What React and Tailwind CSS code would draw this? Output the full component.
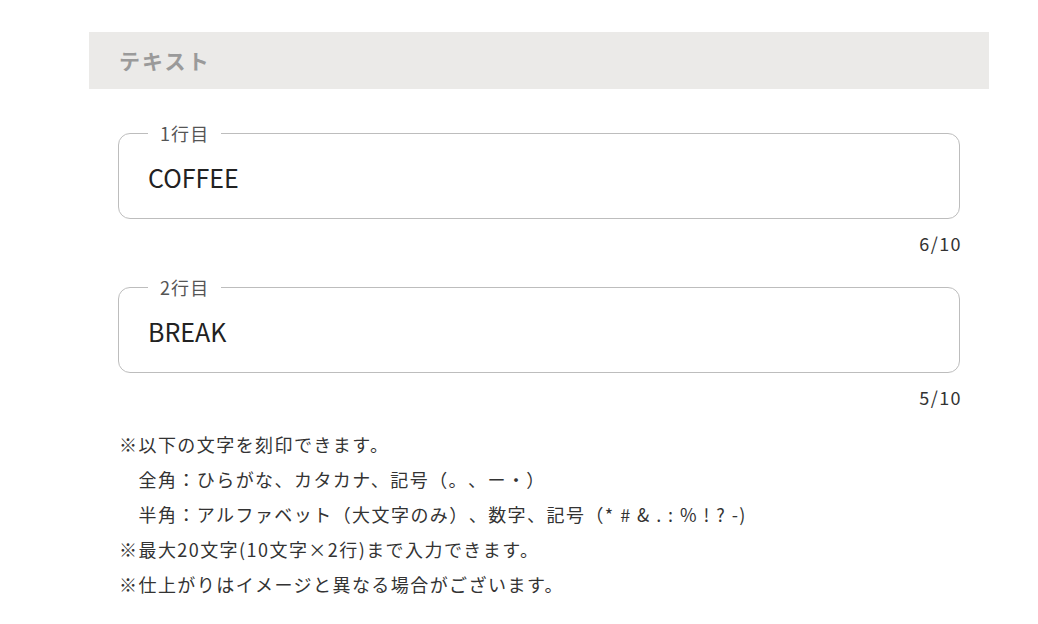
// Engraving text form
const font = { fontFamily: '"Noto Sans CJK JP", "Noto Sans", sans-serif' }

function LineField({ label, value, max }) {
  return (
    <div>
      <fieldset className="rounded-[12px] border border-[#bdbdbd] px-[29px] pb-[17px] m-0 min-w-0">
        <legend className="px-[12px] text-[18px] leading-[24px] text-[#555] tracking-[0.06em]">{label}</legend>
        <input
          readOnly
          value={value}
          className="block w-full h-[48px] mt-[8px] text-[25px] text-[#222] bg-transparent outline-none"
          style={font}
        />
      </fieldset>
      <div className="mt-[12px] -mr-[2px] text-right text-[18px] leading-[24px] text-[#333] tracking-[0.08em]">
        {value.length}/{max}
      </div>
    </div>
  )
}

export default function App() {
  return (
    <div className="min-h-screen bg-white [text-spacing-trim:space-all]" style={font}>
      <div className="w-[900px] ml-[89px] pt-[32px]">

        {/* ── Section header ── */}
        <div className="h-[57px] bg-[#ebeae8] flex items-center px-[30px]">
          <h2 className="text-[21px] font-bold text-[#9a9a9a] tracking-[0.1em]">テキスト</h2>
        </div>

        {/* ── Fields ── */}
        <div className="px-[29px] pt-[32px] space-y-[20px]">
          <LineField label="1行目" value="COFFEE" max={10} />
          <LineField label="2行目" value="BREAK" max={10} />
        </div>

        {/* ── Notes ── */}
        <div className="px-[30px] mt-[18px] text-[18px] leading-[35px] text-[#333] tracking-[0.08em]">
          <p>※以下の文字を刻印できます。</p>
          <p>　全角：ひらがな、カタカナ、記号（。、ー・）</p>
          <p>　半角：アルファベット（大文字のみ）、数字、記号（* # & . : % ! ? -)</p>
          <p>※最大20文字(10文字×2行)まで入力できます。</p>
          <p>※仕上がりはイメージと異なる場合がございます。</p>
        </div>

      </div>
    </div>
  )
}
